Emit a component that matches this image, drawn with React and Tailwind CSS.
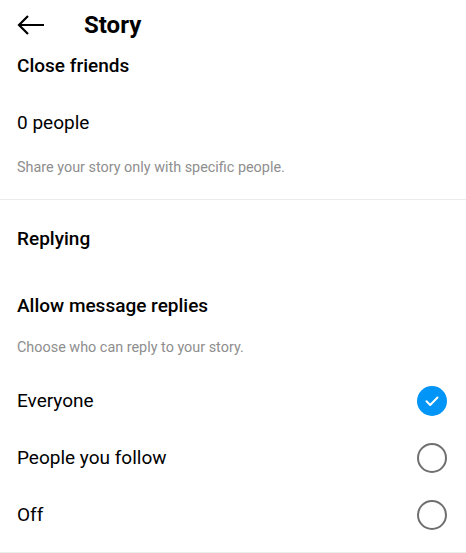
import React, { useState } from 'react';

const options = ['Everyone', 'People you follow', 'Off'];

const Radio = ({ checked }) =>
  checked ? (
    <div className="w-[30px] h-[30px] rounded-full bg-[#0095f6] flex items-center justify-center">
      <svg width="16" height="16" viewBox="0 0 16 16" fill="none">
        <path d="M2.5 8.3 L6.2 12 L13.5 4.5" stroke="white" strokeWidth="2" strokeLinecap="round" strokeLinejoin="round" />
      </svg>
    </div>
  ) : (
    <div className="w-[30px] h-[30px] rounded-full border-2 border-[#6f6f6f]" />
  );

const App = () => {
  const [reply, setReply] = useState('Everyone');

  return (
    <div className="w-[466px] h-[553px] bg-white text-black overflow-hidden font-['Roboto','Liberation_Sans',sans-serif]">
      <div className="h-[50px] flex items-center">
        <div className="w-[84px] pl-[17px]">
          <svg width="28" height="22" viewBox="0 0 28 22" fill="none">
            <path d="M2 11 H27 M11 2 L2 11 L11 20" stroke="black" strokeWidth="2.2" strokeLinejoin="miter" />
          </svg>
        </div>
        <h1 className="text-[24px] font-bold leading-none">Story</h1>
      </div>

      <div className="px-[17px]">
        <div className="h-[32px] flex items-center text-[19px] font-medium">Close friends</div>
        <div className="h-[50px] mt-[16px] flex items-center text-[19px]">0 people</div>
        <div className="h-[40px] flex items-center text-[14.4px] text-[#8e8e8e]">
          Share your story only with specific people.
        </div>
      </div>

      <div className="mt-[11px] border-t border-[#ebebeb]" />

      <div className="px-[17px]">
        <div className="h-[50px] mt-[14px] flex items-center text-[19px] font-medium">Replying</div>
        <div className="h-[50px] mt-[17px] flex items-center text-[19px] font-medium">Allow message replies</div>
        <div className="h-[34px] flex items-center text-[14.4px] text-[#8e8e8e]">
          Choose who can reply to your story.
        </div>
        <div className="mt-[8px]">
          {options.map((opt) => (
            <div
              key={opt}
              onClick={() => setReply(opt)}
              className="h-[57px] flex items-center justify-between cursor-pointer"
            >
              <span className="text-[19px]">{opt}</span>
              <div className="mr-[2px] -mt-[2px]">
                <Radio checked={reply === opt} />
              </div>
            </div>
          ))}
        </div>
      </div>

      <div className="mt-[8px] border-t border-[#ebebeb]" />
    </div>
  );
};

export default App;
